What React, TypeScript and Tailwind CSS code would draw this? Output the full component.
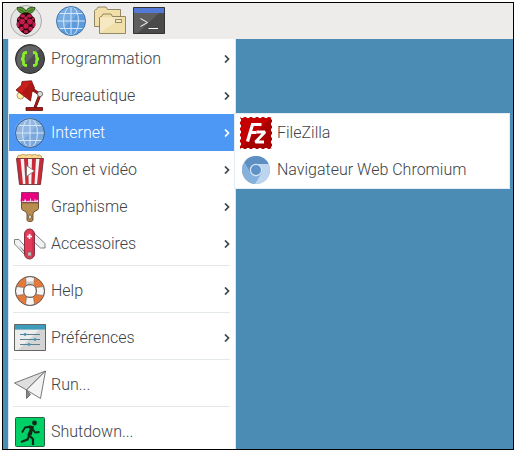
import type { ReactNode } from 'react';

const line = '#555';

function IconRaspberry() {
  return (
    <svg viewBox="0 0 32 32" className="h-8 w-8 shrink-0">
      <circle cx="16" cy="16" r="15.500" fill="#e4e4e4" stroke="#aaa" />
      <g transform="translate(-1.900 -1.900) scale(1.120)">
        <path d="M15.500 9C12 10 8.500 8 8 4c3-.6 6.500 0 8 3 1.500-3 5-3.600 8-3-.5 4-4 6-7.500 5z" fill="#5d9b32" stroke="#273d1a" strokeWidth=".8" />
        <path d="M10 5.500l5 3M22 5.500l-5 3" stroke="#2d5a1a" strokeWidth=".7" />
        <path d="M16 8.500c-3 0-5 1.500-6 3.500-2 1-2.500 3-2 4.500-1 3 0 5.500 2 6.500 1 3 4 4.500 6 5 2-.5 5-2 6-5 2-1 3-3.500 2-6.500.5-1.500 0-3.500-2-4.500-1-2-3-3.500-6-3.500z" fill="#26050d" />
        <g fill="#c31c4a">
          <ellipse cx="13" cy="11.500" rx="2.200" ry="1.600" />
          <ellipse cx="19" cy="11.500" rx="2.200" ry="1.600" />
          <circle cx="16" cy="13.500" r="1.700" />
          <circle cx="12.500" cy="16.500" r="2.500" />
          <circle cx="19.500" cy="16.500" r="2.500" />
          <ellipse cx="9" cy="19" rx="1.300" ry="2.400" />
          <ellipse cx="23" cy="19" rx="1.300" ry="2.400" />
          <circle cx="16" cy="20.500" r="2.400" />
          <circle cx="12" cy="23" r="2" />
          <circle cx="20" cy="23" r="2" />
          <ellipse cx="16" cy="25.500" rx="2.100" ry="1.500" />
          <circle cx="9.500" cy="14" r="1.200" />
          <circle cx="22.500" cy="14" r="1.200" />
        </g>
      </g>
    </svg>
  );
}

function IconGlobe({ pale = false }: { pale?: boolean }) {
  return (
    <svg viewBox="0 0 32 32" className="h-8 w-8 shrink-0">
      <circle cx="16" cy="16" r="14.500" fill={pale ? '#7ca9dc' : '#5c9bdc'} />
      <path d="M26.200 5.800A14.500 14.500 0 1 0 5.800 26.200z" fill="#fff" opacity=".16" />
      <g fill="none" stroke="#d3e6fa" strokeWidth="1">
        <ellipse cx="16" cy="16" rx="7.500" ry="14.500" />
        <path d="M16 1.500v29M1.500 16h29M4 8.500h24M4 23.500h24" />
      </g>
      <circle cx="16" cy="16" r="14.500" fill="none" stroke={pale ? '#40618a' : '#3f74ac'} strokeWidth="1" />
    </svg>
  );
}

function IconFolders() {
  return (
    <svg viewBox="0 0 32 32" className="h-8 w-8 shrink-0">
      <g fill="#f1dfaa" stroke="#7b704c" strokeWidth=".8">
        <path d="M.5 21.500V5.500l1-1h1l1.500-2.500h8L13.500 4.500H26.500v17z" />
        <path d="M5.500 28.500V12.500l1-1h1L9 9h8l1.500 2.500H31.500v17z" />
      </g>
      <path d="M6 28V12.500h22z" fill="#fff" opacity=".3" />
      <path d="M21.500 14.500h6v3h-6z" fill="#f7ebc1" stroke="#7b704c" strokeWidth=".8" />
    </svg>
  );
}

function IconTerminal() {
  return (
    <svg viewBox="0 0 32 32" className="h-8 w-8 shrink-0">
      <path d="M.5 2.500h31v26H.5z" fill="#4a4a4a" stroke="#333" />
      <path d="M1 8h25L5 28H1z" fill="#5e5e5e" />
      <path d="M1 3h30v5H1z" fill="#5279d6" />
      <path d="M7.500 13.500l7 4-7 4M15.500 23.500h9.500" fill="none" stroke="#fff" strokeWidth="1" />
    </svg>
  );
}

function IconBraces() {
  return (
    <svg viewBox="0 0 32 32" className="h-8 w-8 shrink-0">
      <circle cx="16" cy="16" r="14.500" fill="#4b4c4d" stroke="#292929" />
      <path d="M26 6A14.200 14.200 0 0 0 6 26z" fill="#626364" />
      <path
        d="M13 9.500c-2.500 0-3.500.5-3.500 2.500v1.500c0 1.500-.8 2.500-2.500 2.500 1.700 0 2.500 1 2.500 2.500V20c0 2 1 2.500 3.500 2.500M19 9.500c2.500 0 3.500.5 3.500 2.500v1.500c0 1.500.8 2.500 2.500 2.500-1.700 0-2.500 1-2.500 2.500V20c0 2-1 2.500-3.500 2.500"
        fill="none"
        stroke="#85ee25"
        strokeWidth="2.800"
      />
    </svg>
  );
}

function IconLamp() {
  return (
    <svg viewBox="0 0 32 32" className="h-8 w-8 shrink-0">
      <circle cx="6.500" cy="15.500" r="3.500" fill="#fff0a8" stroke="#927c40" strokeWidth=".7" />
      <path d="M18 9l8 5.500-5 13" fill="none" stroke="#54110c" strokeWidth="3" />
      <path d="M18 9l8 5.500-5 13" fill="none" stroke="#b01812" strokeWidth="1.800" />
      <path d="M8 1.500L17.500.8 20.500 8l-2.500 4-1.500 9L2 10l5.500-5z" fill="#c9201b" stroke="#70120f" strokeWidth=".8" strokeLinejoin="round" />
      <path d="M8 13l9-11 3.200 6-2.400 4-1.500 8.500z" fill="#8d0d0a" opacity=".4" />
      <circle cx="26" cy="14" r="2.600" fill="#ddd" stroke="#555" strokeWidth=".8" />
      <path d="M12 27.500h16.500v3H12z" fill="#a81915" stroke="#5d0e0b" strokeWidth=".8" />
    </svg>
  );
}

function IconPopcorn() {
  return (
    <svg viewBox="0 0 32 32" className="h-8 w-8 shrink-0">
      <path d="M4 5c-2-3 1-4.500 3-3.500 1-2 4-2 5 0 1.500-2 4.500-2 6 0 1-2 4-2 5 0 2.500-1.500 6 .5 4 3.500z" fill="#f8d88d" stroke="#a47f43" strokeWidth=".8" />
      <path d="M2.500 4.500h27L26.500 30.500h-21z" fill="#f5f2f2" />
      <path d="M2.500 4.500h4l2.500 26H5.500zM10 4.500h4l.7 26h-3.200zM18 4.500h4l-1.500 26h-3.200zM25.500 4.500h4l-3 26H23z" fill="#c92a38" />
      <path d="M2.500 4.500h27L26.500 30.500h-21z" fill="none" stroke="#713035" strokeWidth=".9" />
      <path d="M12.500 11.500v11l8-5.500z" fill="#fff" stroke="#75666a" strokeWidth=".8" />
    </svg>
  );
}

function IconBrush() {
  return (
    <svg viewBox="0 0 32 32" className="h-8 w-8 shrink-0">
      <path d="M7.500 10.500h17v7c0 2.500-5.500 2-5.500 5.500v6c0 2-6 2-6 0v-6c0-3.500-5.500-3-5.500-5.500z" fill="#b98c50" stroke="#62482a" strokeWidth=".9" />
      <path d="M7.500 1.500h17v10h-17z" fill="#f7d5e7" />
      <path d="M7.500 1.500h17v8l-1.500-1-1 2-1-3-1 3-1.500-1-1 1-1-4-1 4-1.500-1-1.500 1-1.500-3-1 3-2-1-1.500 1z" fill="#e80080" />
      <path d="M7.500 1.500h17v10h-17z" fill="none" stroke="#813461" strokeWidth=".9" />
      <path d="M8 12h16" stroke="#876337" />
      <rect x="14.800" y="24" width="2.400" height="4" rx="1" fill="#fff" stroke="#62482a" strokeWidth=".8" />
    </svg>
  );
}

function IconKnife() {
  return (
    <svg viewBox="0 0 32 32" className="h-8 w-8 shrink-0">
      <g fill="#f0f1f2" stroke="#62666a" strokeWidth=".8" strokeLinejoin="round">
        <path d="M20 5l11 10.500v4.500h-4.500L19 13z" />
        <path d="M12 19.500L5 11.500H.5v4.500L12 28z" />
      </g>
      <path d="M5 17.500l6 5.500v2.500z" fill="#84898c" />
      <rect x="10.500" y="1" width="10" height="30" rx="5" fill="#e23a58" stroke="#7b2433" strokeWidth=".9" />
      <path d="M18 2.500c1.500 1 2 2.500 2 4v19c0 1.500-.5 3-2 4z" fill="#b92642" opacity=".5" />
      <path d="M15.500 6v5M13 8.500h5" stroke="#fff" strokeWidth="1.700" />
      <path d="M13.500 24h4v4h-4z" fill="#c6bbb0" stroke="#76606a" strokeWidth=".8" />
    </svg>
  );
}

function IconLifebuoy() {
  return (
    <svg viewBox="0 0 32 32" className="h-8 w-8 shrink-0">
      <circle cx="16" cy="16" r="10.500" fill="none" stroke="#e37a3a" strokeWidth="8" />
      <path d="M11.500 2.100q4.500-1.500 9 0L19.500 10h-7zM11.500 29.900q4.500 1.500 9 0L19.500 22h-7zM2.100 11.500q-1.500 4.500 0 9L10 19.500v-7zM29.900 11.500q1.500 4.500 0 9L22 19.500v-7z" fill="#f5f5f5" stroke="#75675f" strokeWidth=".6" />
      <path d="M12 6.500h8L19.500 10h-7z" fill="#c9c9c9" />
      <g fill="none" stroke="#5d544d" strokeWidth=".9">
        <circle cx="16" cy="16" r="14.500" />
        <circle cx="16" cy="16" r="6.500" />
      </g>
    </svg>
  );
}

function IconPreferences() {
  return (
    <svg viewBox="0 0 32 32" className="h-8 w-8 shrink-0">
      <path d="M.5 2.500h31v26H.5z" fill="#d4d4d4" />
      <path d="M1 8h24L4 28H1z" fill="#ededed" />
      <path d="M1 3h30v4.500H1z" fill="#3d9dbb" />
      <path d="M6 12.500h20M6 17.500h20M6 22.500h20" stroke="#597e8e" strokeWidth="1" />
      <g fill="#4299bb">
        <circle cx="11" cy="12.500" r="1.400" />
        <circle cx="21" cy="17.500" r="1.400" />
        <circle cx="15" cy="22.500" r="1.400" />
      </g>
      <path d="M.5 2.500h31v26H.5z" fill="none" stroke={line} strokeWidth=".9" />
    </svg>
  );
}

function IconPlane() {
  return (
    <svg viewBox="0 0 32 32" className="h-8 w-8 shrink-0">
      <g stroke="#55595b" strokeWidth=".8" strokeLinejoin="round">
        <path d="M12.500 21v8.500l4-4z" fill="#888" />
        <path d="M31.500 2L.5 14l12 7z" fill="#dedede" />
        <path d="M31.500 2l-5 27.500-14-8.500z" fill="#f4f4f4" />
      </g>
    </svg>
  );
}

function IconExit() {
  return (
    <svg viewBox="0 0 32 32" className="h-8 w-8 shrink-0">
      <rect x="1.500" y="1.500" width="29" height="29" rx="1" fill="#00d166" stroke="#24613f" />
      <circle cx="20.500" cy="7" r="2.400" fill="#12271a" />
      <path d="M17.500 12l-3 7 4.500 4v6M15.500 18.500l-2 5-6.500 2.500" fill="none" stroke="#12271a" strokeWidth="2.200" strokeLinejoin="round" />
      <path d="M15 11l3 .5-2 7.500" fill="none" stroke="#12271a" strokeWidth="3.200" />
      <path d="M17 10.500l-6 1-3 5M18 12l3 4.500 4.500-.5" fill="none" stroke="#12271a" strokeWidth="1.800" strokeLinejoin="round" />
    </svg>
  );
}

function IconFileZilla() {
  return (
    <svg viewBox="0 0 32 32" className="h-8 w-8 shrink-0">
      <path d="M0 0h32v32H0z" fill="#a80000" />
      <path d="M0 0h32L0 32z" fill="#c40000" />
      <path d="M.5.5h31v31H.5z" fill="none" stroke="#fff" strokeWidth="1" strokeDasharray="3 3" />
      <path d="M21.500 7.500H12.500L7.500 24.500M10.500 15.500h6" fill="none" stroke="#fff" strokeWidth="3.200" />
      <path d="M16.500 15h8.500L15.500 25h8.500" fill="none" stroke="#fff" strokeWidth="2.800" strokeLinejoin="bevel" />
    </svg>
  );
}

function IconChromium() {
  return (
    <svg viewBox="0 0 32 32" className="h-8 w-8 shrink-0">
      <circle cx="16" cy="16" r="14" fill="#8db6df" />
      <path d="M16 10h12.600A14 14 0 0 0 4.300 8.300L10.500 19A6.500 6.500 0 0 1 16 10z" fill="#5d8fc2" />
      <path d="M4.300 8.300A14 14 0 0 0 15 30l6.500-11a6.500 6.500 0 0 1-11 0z" fill="#86b1dc" />
      <path d="M28.600 10H16a6.500 6.500 0 0 1 5.500 9.500L15 30A14 14 0 0 0 28.600 10z" fill="#bdd5ee" />
      <circle cx="16" cy="16" r="6.200" fill="#d5e5f5" />
      <circle cx="16" cy="16" r="5" fill="#5f92c8" />
    </svg>
  );
}

function Chevron() {
  return (
    <svg viewBox="0 0 6 8" className="ml-auto h-2 w-1.5 shrink-0">
      <path d="M1 .5L4.500 4 1 7.500" fill="none" stroke="currentColor" strokeWidth="1.700" />
    </svg>
  );
}

type Item = { label: string; icon: ReactNode; arrow?: boolean; active?: boolean };

const groups: Item[][] = [
  [
    { label: 'Programmation', icon: <IconBraces />, arrow: true },
    { label: 'Bureautique', icon: <IconLamp />, arrow: true },
    { label: 'Internet', icon: <IconGlobe pale />, arrow: true, active: true },
    { label: 'Son et vidéo', icon: <IconPopcorn />, arrow: true },
    { label: 'Graphisme', icon: <IconBrush />, arrow: true },
    { label: 'Accessoires', icon: <IconKnife />, arrow: true },
  ],
  [{ label: 'Help', icon: <IconLifebuoy />, arrow: true }],
  [{ label: 'Préférences', icon: <IconPreferences />, arrow: true }],
  [{ label: 'Run...', icon: <IconPlane /> }],
  [{ label: 'Shutdown...', icon: <IconExit /> }],
];

const submenu: Item[] = [
  { label: 'FileZilla', icon: <IconFileZilla /> },
  { label: 'Navigateur Web Chromium', icon: <IconChromium /> },
];

function MenuItem({ label, icon, arrow, active }: Item) {
  return (
    <button
      type="button"
      role="menuitem"
      aria-haspopup={arrow ? 'menu' : undefined}
      className={`flex h-[37px] w-full items-center gap-[5px] px-[5px] text-left whitespace-nowrap ${
        active ? 'bg-[#4d97f5] text-white' : 'text-[#3d4347]'
      }`}
    >
      {icon}
      {label}
      {arrow && <Chevron />}
    </button>
  );
}

export default function App() {
  return (
    <div className="bg-white pt-0.5 pr-1 pb-[3px] pl-0.5 font-[Roboto,sans-serif] text-base leading-5 font-light">
      <div className="overflow-hidden border border-black bg-[#4a8cb3]">
        <header className="flex h-9 items-center bg-[#edecea] pl-[7px]">
          <button type="button" aria-label="Menu" className="mr-[13px]">
            <IconRaspberry />
          </button>
          <div className="flex gap-[7px]">
            <button type="button" aria-label="Web">
              <IconGlobe />
            </button>
            <button type="button" aria-label="Files">
              <IconFolders />
            </button>
            <button type="button" aria-label="Terminal">
              <IconTerminal />
            </button>
          </div>
        </header>
        <main className="relative -mb-px pl-[5px]">
          <div role="menu" className="w-[228px] border-x border-[#d6e6f3] bg-white pt-px">
            {groups.map((items, i) => (
              <div key={items[0].label}>
                {i > 0 && <hr className="mt-[3px] mr-[5px] mb-1.5 ml-1 border-[#e2e8ea]" />}
                {items.map((item) => (
                  <MenuItem key={item.label} {...item} />
                ))}
              </div>
            ))}
          </div>
          <div
            role="menu"
            className="absolute top-[74px] right-[3px] left-[231px] border border-[#e3edf3] bg-white"
          >
            {submenu.map((item) => (
              <MenuItem key={item.label} {...item} />
            ))}
          </div>
        </main>
      </div>
    </div>
  );
}
